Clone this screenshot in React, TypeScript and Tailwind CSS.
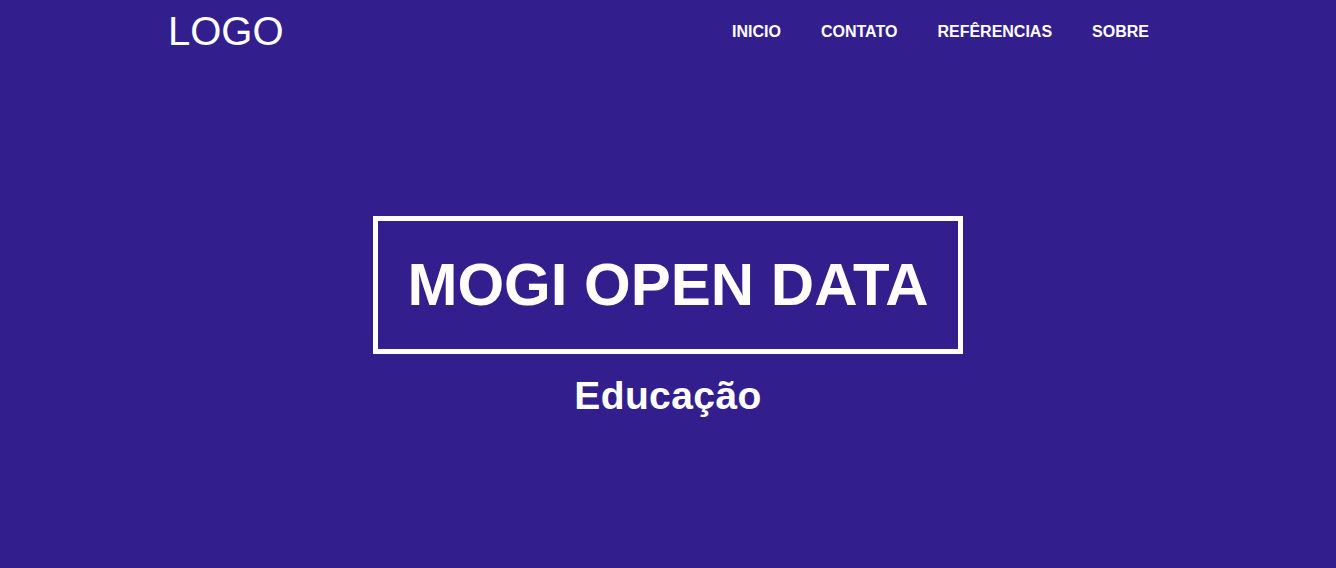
import React from "react";

export default function App() {
  const font = { fontFamily: '"Liberation Sans", Arial, sans-serif' };
  return (
    <div className="min-h-[568px] w-full bg-[#331e8e] text-white" style={font}>
      <header className="mx-auto flex h-[62px] w-[1000px] items-center justify-between">
        <div className="text-[40px] leading-[46px] font-normal">LOGO</div>
        <nav className="mr-[-1px] mt-[2px] flex items-center">
          {["INICIO", "CONTATO", "REFÊRENCIAS", "SOBRE"].map((l) => (
            <a key={l} className="px-5 text-[16px] leading-[18px] font-bold" href="#">
              {l}
            </a>
          ))}
        </nav>
      </header>
      <main className="flex flex-col items-center pt-[154px]">
        <div className="border-[5px] border-white px-[29.5px] py-[30px]">
          <h1 className="text-[60px] leading-[68px] font-bold">MOGI OPEN DATA</h1>
        </div>
        <h2 className="mt-[20px] text-[39px] leading-[44px] font-bold tracking-[0.4px]">Educação</h2>
      </main>
    </div>
  );
}
